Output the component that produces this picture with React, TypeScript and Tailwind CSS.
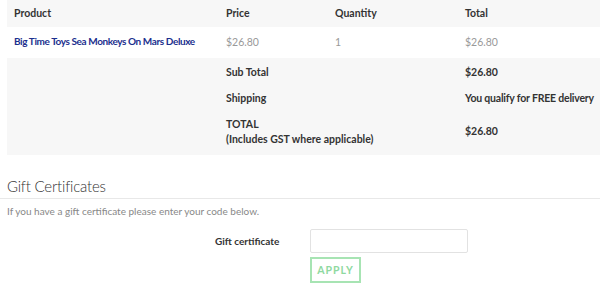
import React from 'react';

const font = { fontFamily: 'Lato, "Liberation Sans", sans-serif' };

const App: React.FC = () => {
  return (
    <div className="w-[600px] h-[292px] bg-white overflow-hidden text-[#333]" style={font}>
      <div className="ml-[7px]">
        <div className="grid grid-cols-[212px_109px_130px_1fr] h-[27px] items-center bg-[#f7f7f7] text-[10.5px] font-bold">
          <div className="pl-[7px]">Product</div>
          <div className="pl-[7px]">Price</div>
          <div className="pl-[7px]">Quantity</div>
          <div className="pl-[7px]">Total</div>
        </div>
        <div className="grid grid-cols-[212px_109px_130px_1fr] h-[31px] items-center text-[10.5px]">
          <div className="pl-[7px] text-[10px] tracking-[-0.4px] font-bold text-[#1b2f8e] -mt-[3px] whitespace-nowrap">
            Big Time Toys Sea Monkeys On Mars Deluxe
          </div>
          <div className="pl-[7px] text-[#999]">$26.80</div>
          <div className="pl-[7px] text-[#999]">1</div>
          <div className="pl-[7px] text-[#999]">$26.80</div>
        </div>
        <div className="grid grid-cols-[212px_239px_1fr] bg-[#f7f7f7] text-[10.5px] font-bold pt-[7px] pb-[8px] whitespace-nowrap">
          <div />
          <div className="pl-[7px] h-[26px]">Sub Total</div>
          <div className="pl-[7px] h-[26px]">$26.80</div>
          <div />
          <div className="pl-[7px] h-[26px]">Shipping</div>
          <div className="pl-[7px] h-[26px] tracking-[-0.2px]">You qualify for FREE delivery</div>
          <div />
          <div className="pl-[7px] leading-[15px]">
            TOTAL
            <br />
            (Includes GST where applicable)
          </div>
          <div className="pl-[7px] flex items-center">$26.80</div>
        </div>
      </div>

      <div className="mt-[21px]">
        <h2 className="pl-[7px] text-[15px] tracking-[-0.2px] leading-[20px] font-light text-[#333] pb-[2px] border-b border-[#e8e8e8]">
          Gift Certificates
        </h2>
        <p className="pl-[7px] mt-[5px] text-[10px] leading-[14px] text-[#888]">
          If you have a gift certificate please enter your code below.
        </p>
      </div>

      <div className="mt-[11px] flex items-center">
        <label className="w-[310px] pl-[215px] text-[10px] font-bold text-[#333]">Gift certificate</label>
        <input
          type="text"
          className="w-[158px] h-[24px] border border-[#e2e2e2] rounded-[2px] bg-white outline-none"
        />
      </div>
      <div className="mt-[3px] pl-[310px]">
        <button className="w-[51px] h-[26px] border-2 border-[#a7e4b3] text-[#8fd9a0] text-[10.5px] font-bold tracking-[1px] leading-none">
          APPLY
        </button>
      </div>
    </div>
  );
};

export default App;
